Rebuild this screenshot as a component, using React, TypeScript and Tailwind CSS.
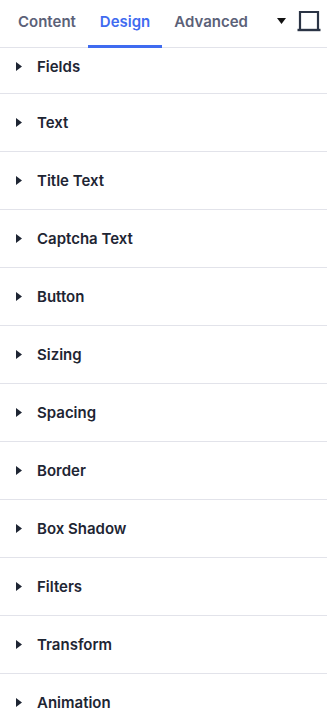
import React from 'react'

const sections = [
  'Fields',
  'Text',
  'Title Text',
  'Captcha Text',
  'Button',
  'Sizing',
  'Spacing',
  'Border',
  'Box Shadow',
  'Filters',
  'Transform',
  'Animation',
]

const tabs = ['Content', 'Design', 'Advanced']

function Caret() {
  return (
    <svg width="6" height="9" viewBox="0 0 6 9" className="shrink-0">
      <path d="M0 0 L6 4.5 L0 9 Z" fill="#1e2533" />
    </svg>
  )
}

function DeviceIcon() {
  return (
    <svg width="24" height="22" viewBox="0 0 24 22" className="shrink-0">
      <path d="M3 20 V2 H21 V20" fill="none" stroke="#2b3445" strokeWidth="2.2" />
      <path d="M0.5 20 H23.5" stroke="#2b3445" strokeWidth="2.4" />
    </svg>
  )
}

export default function App() {
  return (
    <div className="w-[327px] h-[718px] overflow-hidden bg-white" style={{ fontFamily: 'Inter, "Noto Sans", sans-serif' }}>
      <div className="flex h-[48px] items-stretch border-b border-[#e2e3ea]">
        <div className="flex pl-[6px]">
          {tabs.map((t) => {
            const active = t === 'Design'
            return (
              <div
                key={t}
                className={
                  active
                    ? 'flex items-center px-[12px] text-[15px] font-semibold text-[#3f6bf0] border-b-[3px] border-[#3f6bf0] -mb-[1px]'
                    : 'flex items-center px-[12px] pb-[2px] text-[15px] font-semibold text-[#5b6178]'
                }
              >
                {t}
              </div>
            )
          })}
        </div>
        <div className="ml-auto flex items-center gap-[11px] pr-[6px] pb-[5px]">
          <svg width="9" height="6" viewBox="0 0 9 6">
            <path d="M0 0 H9 L4.5 6 Z" fill="#111" />
          </svg>
          <DeviceIcon />
        </div>
      </div>
      <div>
        {sections.map((s, i) => (
          <div
            key={s}
            className={
              (i === 0 ? 'h-[46px] pb-[9px]' : 'h-[58px]') +
              ' flex items-center gap-[15px] pl-[16px] border-b border-[#e2e3ea]'
            }
          >
            <Caret />
            <span className="text-[15px] leading-none font-semibold text-[#1e2533]">{s}</span>
          </div>
        ))}
      </div>
    </div>
  )
}
